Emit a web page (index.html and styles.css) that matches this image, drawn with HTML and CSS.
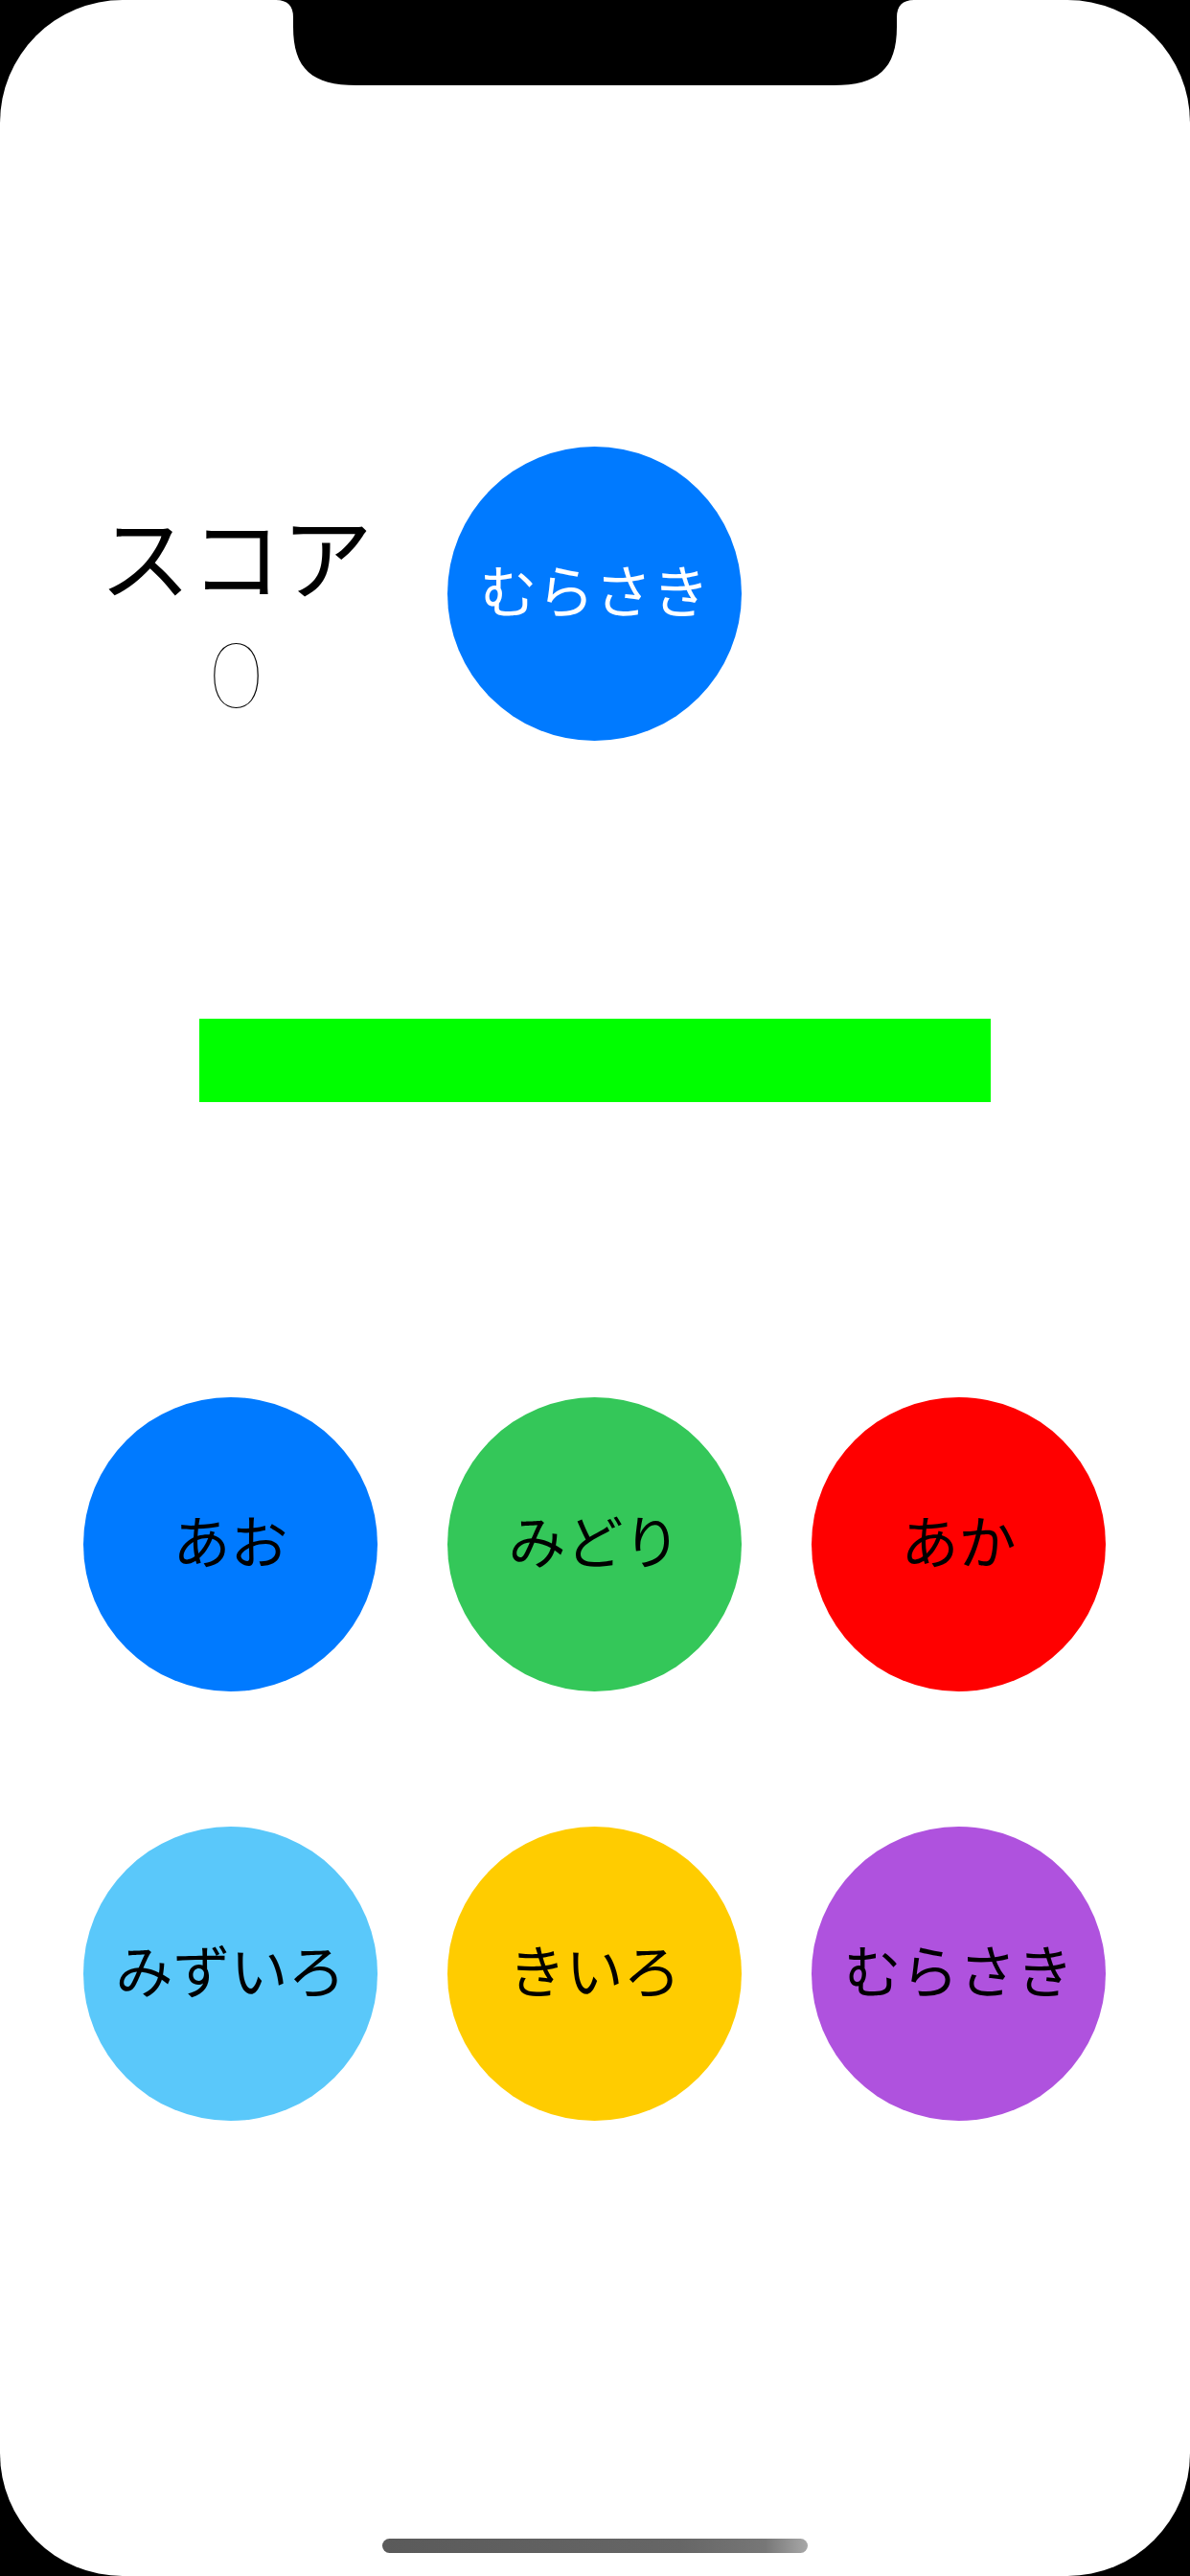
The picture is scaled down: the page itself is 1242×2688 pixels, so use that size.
FILE: index.html
```html
<!DOCTYPE html>
<html lang="ja">
<head>
<meta charset="utf-8">
<title>いろあて</title>
<link rel="stylesheet" href="styles.css">
</head>
<body>
<div class="screen">
  <svg class="notch" width="1242" height="90" viewBox="0 0 1242 90">
    <path d="M288 0 Q306 0 306 18 L306 28 C306 72 326 89 372 89 L870 89 C916 89 936 72 936 28 L936 18 Q936 0 954 0 Z" fill="#000"/>
  </svg>

  <div class="row top-row">
    <div class="score">
      <div class="score-label">スコア</div>
      <div class="score-value">0</div>
    </div>
    <div class="circle blue target">むらさき</div>
  </div>

  <div class="timer-bar"></div>

  <div class="row choices">
    <div class="circle blue">あお</div>
    <div class="circle green">みどり</div>
    <div class="circle red">あか</div>
  </div>

  <div class="row choices second">
    <div class="circle cyan">みずいろ</div>
    <div class="circle yellow">きいろ</div>
    <div class="circle purple">むらさき</div>
  </div>

  <div class="home-indicator"></div>
</div>
</body>
</html>
```
FILE: styles.css
```css
html, body {
  margin: 0;
  padding: 0;
  background: #000;
}

body {
  width: 1242px;
  height: 2688px;
  font-family: "Noto Sans CJK JP", "Noto Sans", sans-serif;
}

.screen {
  position: relative;
  width: 1242px;
  height: 2688px;
  background: #fff;
  border-radius: 128px;
  overflow: hidden;
  display: flex;
  flex-direction: column;
  align-items: center;
}

.notch {
  position: absolute;
  top: 0;
  left: 0;
}

.row {
  width: 1242px;
  box-sizing: border-box;
  padding: 0 87px;
  display: grid;
  grid-template-columns: 307px 307px 307px;
  column-gap: 73px;
}

.top-row {
  margin-top: 466px;
}

.score {
  display: flex;
  flex-direction: column;
  align-items: center;
  padding-left: 12px;
  padding-top: 64px;
}

.score-label {
  font-size: 95px;
  line-height: 95px;
  color: #000;
}

.score-value {
  margin-top: 30px;
  font-family: "Lato", "Inter", "Roboto", sans-serif;
  font-weight: 100;
  font-size: 94px;
  line-height: 94px;
  color: #000;
}

.circle {
  width: 307px;
  height: 307px;
  border-radius: 50%;
  display: flex;
  align-items: center;
  justify-content: center;
  font-size: 60px;
  line-height: 60px;
  color: #000;
  padding-bottom: 12px;
  box-sizing: border-box;
  white-space: nowrap;
}

.target {
  color: #fff;
}

.blue { background: #007aff; }
.green { background: #34c759; }
.red { background: #ff0000; }
.cyan { background: #5ac8fa; }
.yellow { background: #ffcc00; }
.purple { background: #af52de; }

.timer-bar {
  margin-top: 290px;
  width: 826px;
  height: 87px;
  background: #00ff00;
}

.choices {
  margin-top: 308px;
}

.choices.second {
  margin-top: 141px;
}

.home-indicator {
  margin-top: auto;
  margin-bottom: 24px;
  width: 444px;
  height: 15px;
  border-radius: 8px;
  background: linear-gradient(to right, #5a5a5a 0%, #666 70%, #777 90%, #a8a8a8 100%);
}
```
